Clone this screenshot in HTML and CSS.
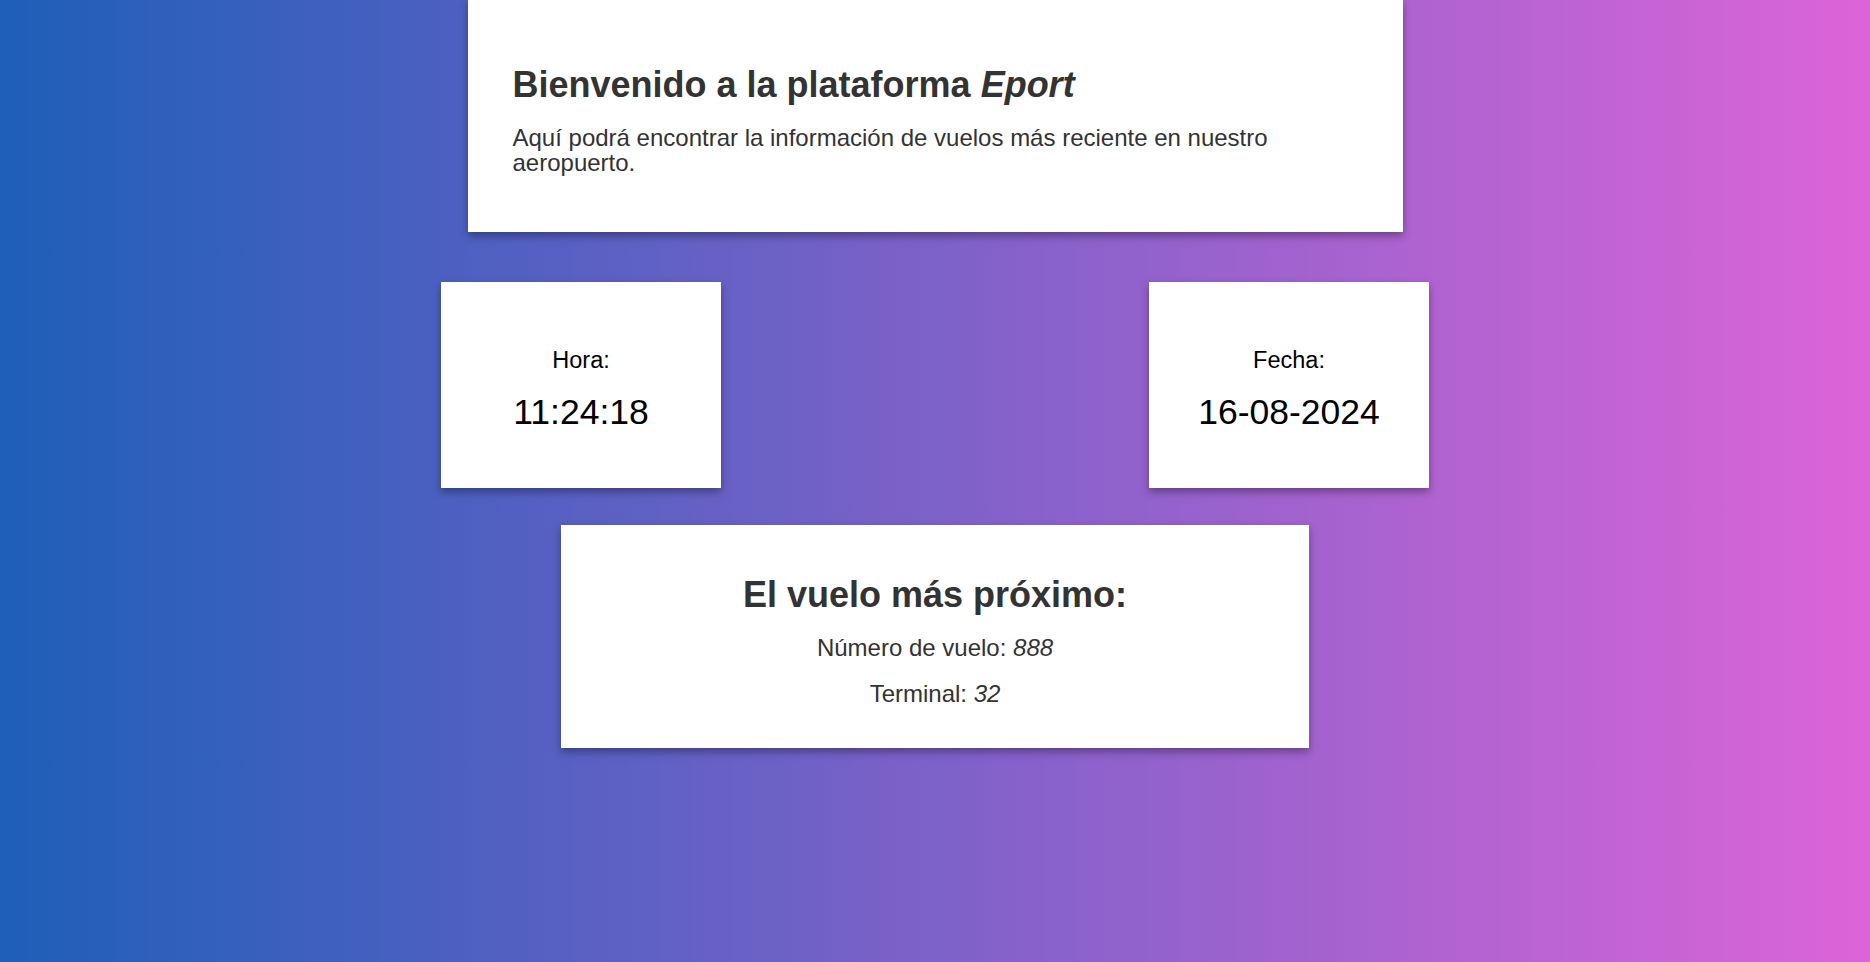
FILE: index.html
```html
<!DOCTYPE html>
<html lang="es">
<head>
<meta charset="utf-8">
<title>Eport</title>
<link rel="stylesheet" href="styles.css">
</head>
<body>
<main class="page">
  <section class="card welcome">
    <h1 class="welcome-title">Bienvenido a la plataforma <em>Eport</em></h1>
    <p class="welcome-text">Aquí podrá encontrar la información de vuelos más reciente en nuestro aeropuerto.</p>
  </section>
  <section class="clock-row">
    <div class="card clock">
      <div class="clock-label">Hora:</div>
      <div class="clock-value">11:24:18</div>
    </div>
    <div class="card clock">
      <div class="clock-label">Fecha:</div>
      <div class="clock-value">16-08-2024</div>
    </div>
  </section>
  <section class="card flight">
    <h2 class="flight-title">El vuelo más próximo:</h2>
    <p class="flight-line">Número de vuelo: <em>888</em></p>
    <p class="flight-line">Terminal: <em>32</em></p>
  </section>
</main>
</body>
</html>
```

FILE: styles.css
```css
* { box-sizing: border-box; }

html, body {
  margin: 0;
  padding: 0;
}

body {
  min-height: 100vh;
  background: linear-gradient(to right, #1e5fb9, #dc64d8);
  font-family: "Liberation Sans", Arial, sans-serif;
  color: #333;
}

.page {
  display: flex;
  flex-direction: column;
  align-items: center;
  min-height: 100vh;
}

.card {
  background: #fff;
  box-shadow: 0 4px 8px rgba(0, 0, 0, 0.35);
}

.welcome {
  width: 50%;
  padding: 65px 45px 57px;
}

.welcome-title {
  margin: 0;
  font-size: 36px;
  line-height: 40px;
  font-weight: bold;
  color: #333;
}

.welcome-text {
  margin: 20px 0 0;
  font-size: 24px;
  line-height: 25px;
  color: #333;
}

.clock-row {
  margin-top: 50px;
  width: 988px;
  display: flex;
  justify-content: space-between;
}

.clock {
  width: 280px;
  height: 206px;
  padding-top: 65px;
  text-align: center;
  color: #000;
}

.clock-label {
  font-size: 23.5px;
  line-height: 26px;
}

.clock-value {
  margin-top: 19px;
  font-size: 35.5px;
  line-height: 40px;
}

.flight {
  margin-top: 37px;
  width: 40%;
  padding: 50px 20px 41px;
  text-align: center;
}

.flight-title {
  margin: 0;
  font-size: 36px;
  line-height: 40px;
  font-weight: bold;
  color: #333;
}

.flight-line {
  margin: 20px 0 0;
  font-size: 24px;
  line-height: 26px;
  color: #333;
}
```
